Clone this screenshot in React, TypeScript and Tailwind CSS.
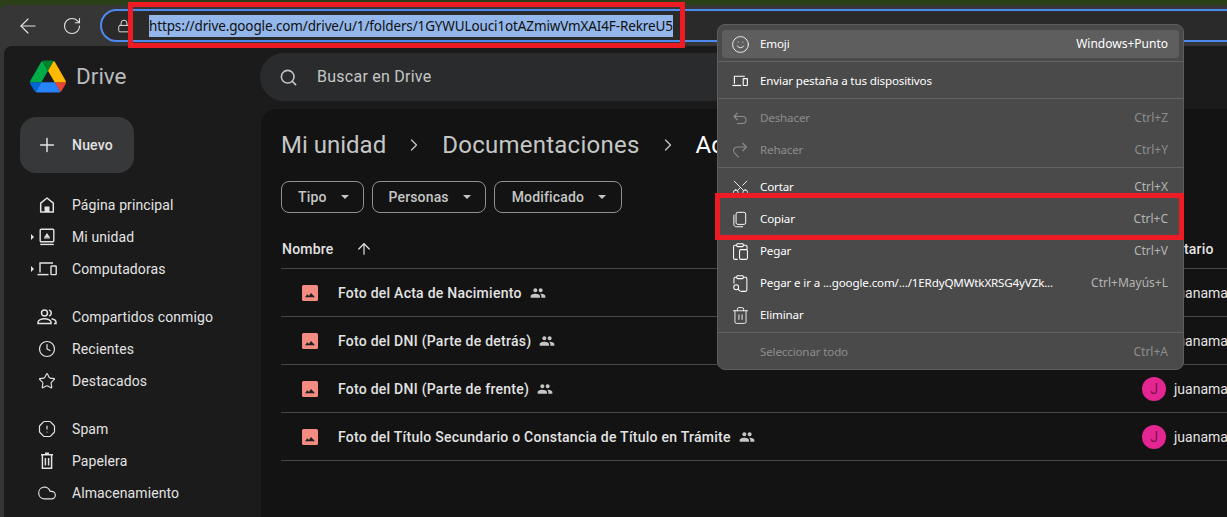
import { ArrowLeft, ArrowUp, ChevronRight, Clock, Cloud, Lock, OctagonAlert, Plus, RotateCw, Scissors, Search, Smile, Star, Trash2 } from 'lucide-react';
import type { ReactNode } from 'react';

function DriveLogo() {
  return (
    <svg viewBox="0 0 87.3 78" className="w-[36px] h-[33px]">
      <path d="m6.6 66.85 3.85 6.65c.8 1.4 1.95 2.5 3.3 3.3l13.75-23.8h-27.5c0 1.55.4 3.1 1.2 4.5z" fill="#0066da" />
      <path d="m43.65 25-13.75-23.8c-1.35.8-2.5 1.9-3.3 3.3l-25.4 44a9.06 9.06 0 0 0 -1.2 4.5h27.5z" fill="#00ac47" />
      <path d="m73.55 76.8c1.35-.8 2.5-1.9 3.3-3.3l1.6-2.75 7.65-13.25c.8-1.4 1.2-2.95 1.2-4.5h-27.502l5.852 11.5z" fill="#ea4335" />
      <path d="m43.65 25 13.75-23.8c-1.35-.8-2.9-1.2-4.5-1.2h-18.5c-1.6 0-3.15.45-4.5 1.2z" fill="#00832d" />
      <path d="m59.8 53h-32.3l-13.75 23.8c1.35.8 2.9 1.2 4.5 1.2h50.8c1.6 0 3.15-.45 4.5-1.2z" fill="#2684fc" />
      <path d="m73.4 26.5-12.7-22c-.8-1.4-1.95-2.5-3.3-3.3l-13.75 23.8 16.15 28h27.45c0-1.55-.4-3.1-1.2-4.5z" fill="#ffba00" />
    </svg>
  );
}

function HomeIcon() {
  return (
    <svg viewBox="0 0 18 18" className="w-[18px] h-[18px]" fill="none" stroke="currentColor" strokeWidth="1.5">
      <path d="M2.7 16V7.2L9 2l6.3 5.2V16z" strokeLinejoin="round" />
      <rect x="6.5" y="10.5" width="5" height="5.5" fill="currentColor" stroke="none" />
    </svg>
  );
}

function MyDriveIcon() {
  return (
    <svg viewBox="0 0 18 18" className="w-[18px] h-[18px]" fill="none" stroke="currentColor" strokeWidth="1.4">
      <rect x="2.2" y="1.2" width="13.6" height="12.6" rx="1" />
      <path d="M2.2 16.4h13.6" />
      <path d="M6 9.4 9 5l3 4.4z" fill="currentColor" stroke="none" />
      <path d="M6 10h6" strokeWidth="1" />
    </svg>
  );
}

function DevicesIcon({ className }: { className: string }) {
  return (
    <svg viewBox="0 0 20 14" className={className} fill="none" stroke="currentColor" strokeWidth="1.4">
      <path d="M3 10.5V1h13" />
      <path d="M0.5 12.6h11" strokeWidth="1.5" />
      <rect x="14" y="4" width="5.2" height="8.6" rx="0.6" />
    </svg>
  );
}

function PeopleOutline() {
  return (
    <svg viewBox="0 0 20 18" className="w-[20px] h-[18px]" fill="none" stroke="currentColor" strokeWidth="1.5">
      <circle cx="7.5" cy="5" r="3" />
      <path d="M1 15.5v-1.2c0-2.2 3.6-3.6 6.5-3.6s6.5 1.4 6.5 3.6v1.2z" />
      <path d="M12 2.1a3 3 0 0 1 0 5.8M14.5 10.8c2.3.5 4.5 1.6 4.5 3.4v1.3h-2" />
    </svg>
  );
}

function PapeleraIcon() {
  return (
    <svg viewBox="0 0 18 18" className="w-[18px] h-[18px]" fill="none" stroke="currentColor" strokeWidth="1.5">
      <path d="M3 2.8h12M7 1.2h4M4.4 3v13.2h9.2V3" />
      <path d="M7.4 6v7.4M10.6 6v7.4" />
    </svg>
  );
}

function SharedIcon() {
  return (
    <svg viewBox="0 0 24 24" className="w-4 h-4 text-[#c4c7c5]" fill="currentColor">
      <path d="M16 11c1.66 0 2.99-1.34 2.99-3S17.66 5 16 5s-3 1.34-3 3 1.34 3 3 3zm-8 0c1.66 0 2.99-1.34 2.99-3S9.66 5 8 5 5 6.34 5 8s1.34 3 3 3zm0 2c-2.33 0-7 1.17-7 3.5V19h14v-2.5C15 14.17 10.33 13 8 13zm8 0c-.29 0-.62.02-.97.05 1.16.84 1.97 1.97 1.97 3.45V19h6v-2.5c0-2.33-4.67-3.5-7-3.5z" />
    </svg>
  );
}

function ImageIcon() {
  return (
    <svg viewBox="0 0 16 16" className="w-4 h-4 shrink-0">
      <rect width="16" height="16" rx="1.5" fill="#f28b82" />
      <path d="M3 12.2 5.4 9.2l1.5 1.7 2.1-2.9 4 4.2z" fill="#1f1f1f" />
    </svg>
  );
}

function UndoIcon() {
  return (
    <svg viewBox="0 0 16 16" className="w-4 h-4" fill="none" stroke="currentColor" strokeWidth="1.1">
      <path d="M2 6.5h8.5a3.5 3.5 0 0 1 0 7H5" />
      <path d="M5.5 3 2 6.5 5.5 10" />
    </svg>
  );
}

function RedoIcon() {
  return (
    <svg viewBox="0 0 16 16" className="w-4 h-4" fill="none" stroke="currentColor" strokeWidth="1.1">
      <path d="M14.5 5H5.2a3.6 3.6 0 0 0-2.6 6.2l4.2 4.2" />
      <path d="M10.5 1 14.5 5l-4 4" />
    </svg>
  );
}

function CopyIcon() {
  return (
    <svg viewBox="0 0 16 18" className="w-[14px] h-[17px]" fill="none" stroke="currentColor" strokeWidth="1.1">
      <rect x="3.5" y="0.8" width="11" height="13.8" rx="2" />
      <path d="M1 3.5v10.8c0 1.9 1.2 3 3 3h7.5" />
    </svg>
  );
}

function PasteIcon() {
  return (
    <svg viewBox="0 0 16 18" className="w-[15px] h-[17px]" fill="none" stroke="currentColor" strokeWidth="1.1">
      <path d="M4 2.4H2a1.4 1.4 0 0 0-1.4 1.4v12.4A1.4 1.4 0 0 0 2 17.4h3M11 2.4h2.6A1.4 1.4 0 0 1 15 3.8v3" />
      <rect x="4" y="0.8" width="7" height="3" rx="1" />
      <rect x="7" y="7" width="8.4" height="10.4" rx="1.4" />
    </svg>
  );
}

function PasteGoIcon() {
  return (
    <svg viewBox="0 0 16 18" className="w-[15px] h-[17px]" fill="none" stroke="currentColor" strokeWidth="1.1">
      <path d="M1 9V3.8a1.4 1.4 0 0 1 1.4-1.4H4M11 2.4h2.4a1.4 1.4 0 0 1 1.4 1.4v12.2a1.4 1.4 0 0 1-1.4 1.4H8" />
      <rect x="4" y="0.8" width="7" height="3" rx="1" />
      <circle cx="3.4" cy="13" r="2.6" />
      <path d="m5.4 15 2 2.2" />
    </svg>
  );
}

type MenuEntry = { label: string; shortcut?: string; icon?: ReactNode; off?: boolean; hover?: boolean; sep?: boolean };

const MENU: MenuEntry[] = [
  { label: 'Emoji', shortcut: 'Windows+Punto', icon: <Smile className="w-[19px] h-[19px]" strokeWidth={1.1} />, hover: true, sep: true },
  { label: 'Enviar pestaña a tus dispositivos', icon: <DevicesIcon className="w-4 h-3" />, sep: true },
  { label: 'Deshacer', shortcut: 'Ctrl+Z', icon: <UndoIcon />, off: true },
  { label: 'Rehacer', shortcut: 'Ctrl+Y', icon: <RedoIcon />, off: true, sep: true },
  { label: 'Cortar', shortcut: 'Ctrl+X', icon: <Scissors className="w-[19px] h-[19px] -rotate-90" strokeWidth={1.1} /> },
  { label: 'Copiar', shortcut: 'Ctrl+C', icon: <CopyIcon /> },
  { label: 'Pegar', shortcut: 'Ctrl+V', icon: <PasteIcon /> },
  { label: 'Pegar e ir a ...google.com/.../1ERdyQMWtkXRSG4yVZk...', shortcut: 'Ctrl+Mayús+L', icon: <PasteGoIcon /> },
  { label: 'Eliminar', icon: <Trash2 className="w-[19px] h-[19px]" strokeWidth={1.1} />, sep: true },
  { label: 'Seleccionar todo', shortcut: 'Ctrl+A', off: true },
];

const NAV = [
  [
    { label: 'Página principal', icon: <HomeIcon /> },
    { label: 'Mi unidad', icon: <MyDriveIcon />, arrow: true },
    { label: 'Computadoras', icon: <DevicesIcon className="w-[20px] h-[14px]" />, arrow: true },
  ],
  [
    { label: 'Compartidos conmigo', icon: <PeopleOutline /> },
    { label: 'Recientes', icon: <Clock className="w-[18px] h-[18px]" strokeWidth={1.6} /> },
    { label: 'Destacados', icon: <Star className="w-[18px] h-[18px]" strokeWidth={1.5} /> },
  ],
  [
    { label: 'Spam', icon: <OctagonAlert className="w-[18px] h-[18px]" strokeWidth={1.6} /> },
    { label: 'Papelera', icon: <PapeleraIcon /> },
    { label: 'Almacenamiento', icon: <Cloud className="w-5 h-5" strokeWidth={1.4} /> },
  ],
];

const FILTERS = [
  { label: 'Tipo', pad: 'pl-[16px] pr-[14px]' },
  { label: 'Personas', pad: 'pl-[16px] pr-[14px]' },
  { label: 'Modificado', pad: 'pl-[17px] pr-[15px]' },
];

const FILES = [
  { name: 'Foto del Acta de Nacimiento', owner: false },
  { name: 'Foto del DNI (Parte de detrás)', owner: false },
  { name: 'Foto del DNI (Parte de frente)', owner: true },
  { name: 'Foto del Título Secundario o Constancia de Título en Trámite', owner: true },
];

function ContextMenu() {
  return (
    <div className="absolute left-[717px] top-[24px] w-[467px] pt-[3px] pb-px bg-[#4a4a4a] border border-[#5e5e5e] rounded-lg text-[11.6px] font-['Noto_Sans',sans-serif]">
      {MENU.map((m) => (
        <div key={m.label}>
          <div className={`h-8 px-1 flex items-center ${m.off ? 'text-[#8d8d8d]' : 'text-white'}`}>
            <div className={`w-full flex items-center rounded ${m.hover ? 'bg-[#5e5e5e] h-[28px]' : 'h-full'}`}>
              <div className="w-[38px] flex justify-center pr-[2px]">{m.icon}</div>
              <span className="flex-1 whitespace-nowrap tracking-[-0.15px]">{m.label}</span>
              {m.shortcut && <span className={`pr-[11px] text-[12px] ${m.hover ? 'text-white' : m.off ? 'text-[#8d8d8d]' : 'text-[#b4b4b4]'}`}>{m.shortcut}</span>}
            </div>
          </div>
          {m.sep && <div className="mt-px mb-[3px] h-px bg-[#626262]" />}
        </div>
      ))}
    </div>
  );
}

export default function App() {
  return (
    <div className="relative w-[1227px] h-[517px] overflow-hidden bg-[#2b4019] font-['Roboto',sans-serif]">
      <div className="mt-[5px] h-[512px] rounded-tl-lg bg-[#363636] flex flex-col">
        {/* browser toolbar */}
        <div className="h-[41px] flex items-center text-[#e6e6e6] shrink-0">
          <ArrowLeft className="ml-[16px] w-6 h-6 shrink-0" strokeWidth={1.1} />
          <RotateCw className="ml-[22px] w-5 h-5 shrink-0" strokeWidth={1.3} />
          <div className="ml-[18px] w-[1150px] h-[33px] rounded-full border-2 border-[#4d8af0] bg-[#2a2a2a] flex items-center shrink-0">
            <Lock className="ml-[15px] w-[14px] h-[14px] shrink-0" strokeWidth={1.6} />
            <span className="ml-[18px] h-[22px] leading-[22px] bg-[#93b7ea] text-[#101010] text-[13.5px] tracking-[-0.13px] font-['Noto_Sans',sans-serif] whitespace-nowrap">
              https://drive.google.com/drive/u/1/folders/1GYWULouci1otAZmiwVmXAI4F-RekreU5
            </span>
          </div>
        </div>

        <div className="flex-1 ml-1 rounded-tl-lg bg-[#1b1b1c] flex min-h-0">
          {/* sidebar */}
          <div className="w-[256px] shrink-0 text-[#e3e3e3]">
            <div className="flex items-center h-[33px] mt-[14px] ml-[26px] gap-[10px]">
              <DriveLogo />
              <span className="text-[22.5px] text-[#b9bbbe]">Drive</span>
            </div>
            <div className="mt-[24px] ml-[16px] w-[114px] h-[56px] rounded-2xl bg-[#37383a] flex items-center">
              <Plus className="ml-[16px] w-[22px] h-[22px]" strokeWidth={1.6} />
              <span className="ml-[14px] text-[14px] font-medium tracking-[0.2px]">Nuevo</span>
            </div>
            <div className="mt-4 flex flex-col gap-4">
              {NAV.map((group, i) => (
                <div key={i}>
                  {group.map((item) => (
                    <div key={item.label} className="h-8 flex items-center text-[14px] tracking-[0.1px]">
                      <div className="w-[30px] flex justify-end">
                        {item.arrow && <span className="w-0 h-0 border-y-[3px] border-y-transparent border-l-[3px] border-l-[#e3e3e3]" />}
                      </div>
                      <div className="w-[25px] flex justify-center">{item.icon}</div>
                      <span className="ml-[13px] whitespace-nowrap">{item.label}</span>
                    </div>
                  ))}
                </div>
              ))}
            </div>
          </div>

          <div className="flex-1 min-w-0 flex flex-col">
            <div className="h-[48px] mt-[7px] w-[800px] rounded-full bg-[#2a2b2d] flex items-center text-[#c4c7c5] shrink-0">
              <Search className="ml-[19px] w-[19px] h-[19px]" strokeWidth={2} />
              <span className="ml-[19px] text-[16px] tracking-[0.25px]">Buscar en Drive</span>
            </div>

            {/* file list */}
            <div className="mt-2 ml-px flex-1 rounded-tl-2xl bg-[#131313] pl-[20px] text-[#e3e3e3]">
              <div className="h-[72px] flex items-center text-[24px] text-[#c4c7c5]">
                <span>Mi unidad</span>
                <ChevronRight className="mx-[18px] w-5 h-5" strokeWidth={1.5} />
                <span className="tracking-[0.25px]">Documentaciones</span>
                <ChevronRight className="mx-[18px] w-5 h-5" strokeWidth={1.5} />
                <span className="text-white">Actas</span>
              </div>
              <div className="flex gap-2 text-[14px] tracking-[0.15px] text-[#c4c7c5] font-medium">
                {FILTERS.map((f) => (
                  <div key={f.label} className={`h-[32px] flex items-center gap-[14px] border border-[#8e918f] rounded-lg ${f.pad}`}>
                    {f.label}
                    <span className="w-0 h-0 border-x-[4px] border-x-transparent border-t-[4px] border-t-[#c4c7c5]" />
                  </div>
                ))}
              </div>
              <div className="mt-[20px] h-[36px] pb-[3px] pl-px flex items-center border-b border-[#444746] text-[14px] tracking-[0.2px] font-medium">
                <span>Nombre</span>
                <ArrowUp className="ml-[22px] w-[18px] h-[18px]" strokeWidth={1.6} />
                <span className="ml-auto w-[43px] whitespace-nowrap overflow-hidden">tario</span>
              </div>
              {FILES.map((f) => (
                <div key={f.name} className="h-12 pt-px flex items-center border-b border-[#444746] text-[14px] font-medium">
                  <div className="ml-[21px]"><ImageIcon /></div>
                  <span className="ml-[20px] whitespace-nowrap tracking-[0.25px]">{f.name}</span>
                  <div className="ml-[8px]"><SharedIcon /></div>
                  <div className="ml-auto flex items-center w-[85px] font-normal">
                    {f.owner && <div className="w-6 h-6 rounded-full bg-[#e52592] text-[#7a1450] text-[14px] flex items-center justify-center mr-2 shrink-0">J</div>}
                    <span className={f.owner ? '' : 'ml-[32px]'}>juanama</span>
                  </div>
                </div>
              ))}
            </div>
          </div>
        </div>
      </div>

      <ContextMenu />

      {/* red annotations */}
      <div className="absolute left-[128px] top-[2px] w-[557px] h-[46px] border-[5px] border-[#ed1c24]" />
      <div className="absolute left-[715px] top-[193px] w-[469px] h-[47px] border-[5px] border-[#ed1c24]" />
    </div>
  );
}
